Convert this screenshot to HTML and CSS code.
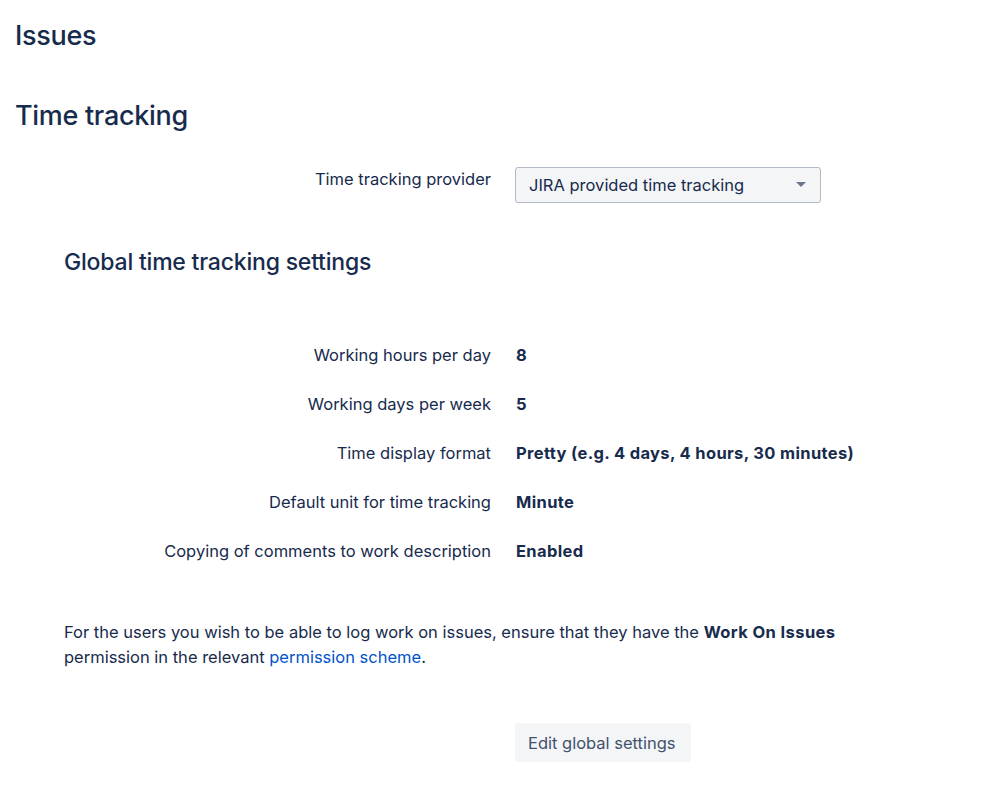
FILE: index.html
```html
<!DOCTYPE html>
<html>
<head>
<meta charset="utf-8">
<link rel="stylesheet" href="styles.css">
</head>
<body>
<div class="page">
  <h1 class="page-title">Issues</h1>
  <h2 class="section-title">Time tracking</h2>
  <div class="field-row provider-row">
    <div class="label">Time tracking provider</div>
    <div class="select">
      <span>JIRA provided time tracking</span>
      <svg class="caret" width="10" height="6" viewBox="0 0 10 6"><path d="M0 0 L10 0 L5 5 Z" fill="#6B778C"/></svg>
    </div>
  </div>
  <div class="global">
    <h3 class="sub-title">Global time tracking settings</h3>
    <div class="settings">
      <div class="field-row"><div class="label">Working hours per day</div><div class="value">8</div></div>
      <div class="field-row"><div class="label">Working days per week</div><div class="value">5</div></div>
      <div class="field-row"><div class="label">Time display format</div><div class="value">Pretty (e.g. 4 days, 4 hours, 30 minutes)</div></div>
      <div class="field-row"><div class="label">Default unit for time tracking</div><div class="value">Minute</div></div>
      <div class="field-row"><div class="label">Copying of comments to work description</div><div class="value">Enabled</div></div>
    </div>
    <p class="note">For the users you wish to be able to log work on issues, ensure that they have the <b>Work On Issues</b> permission in the relevant <a href="#">permission scheme</a>.</p>
  </div>
  <div class="field-row actions">
    <div class="label"></div>
    <button class="btn">Edit global settings</button>
  </div>
</div>
</body>
</html>
```
FILE: styles.css
```css
html, body {
  margin: 0;
  padding: 0;
  background: #fff;
}
body {
  font-family: Inter, "Noto Sans", sans-serif;
  color: #172B4D;
  font-size: 16.5px;
  line-height: 24px;
}
.page-title {
  margin: 0;
  padding: 20px 0 0 15px;
  font-size: 27px;
  line-height: 32px;
  font-weight: 500;
  letter-spacing: -0.3px;
}
.section-title {
  margin: 0;
  padding: 46px 0 0 15px;
  font-size: 27px;
  line-height: 36px;
  font-weight: 500;
  letter-spacing: -0.3px;
}
.field-row {
  display: grid;
  grid-template-columns: 491px auto;
  column-gap: 25px;
  align-items: center;
}
.label {
  text-align: right;
}
.value {
  font-weight: 700;
  letter-spacing: 0.35px;
}
.provider-row {
  margin-top: 33px;
  align-items: start;
}
.select {
  margin-left: -1px;
  width: 306px;
  height: 36px;
  box-sizing: border-box;
  border: 1px solid #B3B9C4;
  border-radius: 3px;
  background: #F4F5F7;
  display: flex;
  align-items: center;
  justify-content: space-between;
  padding: 0 14px 0 13px;
  color: #172B4D;
}
.caret {
  display: block;
}
.global {
  padding-left: 64px;
}
.sub-title {
  margin: 0;
  padding-top: 45px;
  font-size: 23px;
  line-height: 28px;
  font-weight: 500;
  letter-spacing: -0.2px;
}
.settings {
  margin-left: -64px;
  padding-top: 67px;
  display: flex;
  flex-direction: column;
  gap: 25px;
}
.note {
  margin: 57px 0 0 0;
  line-height: 25px;
  max-width: 800px;
}
.note b {
  font-weight: 700;
  letter-spacing: 0.4px;
}
.note a {
  color: #0052CC;
  text-decoration: none;
}
.actions {
  margin-top: 53px;
}
.btn {
  margin-left: -1px;
  justify-self: start;
  font-family: inherit;
  font-size: 16.5px;
  color: #42526E;
  background: #F4F5F7;
  border: none;
  border-radius: 3px;
  height: 39px;
  padding: 0 13px 0 13px;
  width: 176px;
  text-align: left;
}
```
